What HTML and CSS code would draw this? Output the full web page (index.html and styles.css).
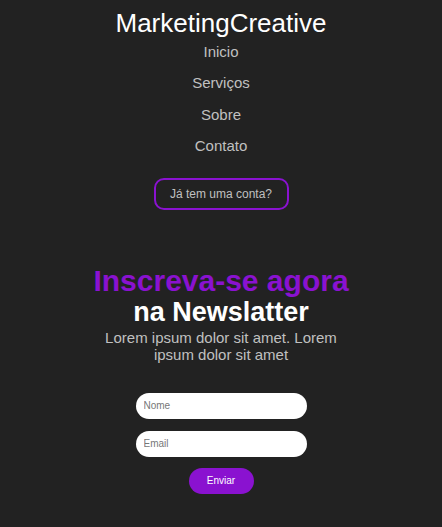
FILE: index.html
```html
<!DOCTYPE html>
<html lang="pt-BR">
<head>
<meta charset="utf-8">
<title>MarketingCreative</title>
<link rel="stylesheet" href="styles.css">
</head>
<body>
<header class="header">
  <h1 class="logo">MarketingCreative</h1>
  <nav class="nav">
    <a class="nav-link" href="#">Inicio</a>
    <a class="nav-link" href="#">Serviços</a>
    <a class="nav-link" href="#">Sobre</a>
    <a class="nav-link" href="#">Contato</a>
  </nav>
  <button class="account-btn">Já tem uma conta?</button>
</header>
<main class="newsletter">
  <h2 class="title"><span class="title-accent">Inscreva-se agora</span><span class="title-main">na Newslatter</span></h2>
  <p class="desc">Lorem ipsum dolor sit amet. Lorem ipsum dolor sit amet</p>
  <form class="form">
    <input class="field" type="text" placeholder="Nome">
    <input class="field" type="email" placeholder="Email">
    <button class="send-btn" type="button">Enviar</button>
  </form>
</main>
</body>
</html>
```
FILE: styles.css
```css
html, body {
  margin: 0;
  padding: 0;
  background: #222222;
  font-family: "Liberation Sans", Arial, sans-serif;
}
.header {
  display: flex;
  flex-direction: column;
  align-items: center;
}
.logo {
  margin: 8px 0 0;
  font-size: 26px;
  font-weight: normal;
  color: #ffffff;
  line-height: 30px;
}
.nav {
  display: flex;
  flex-direction: column;
  align-items: center;
  gap: 13.3px;
  margin-top: 5px;
}
.nav-link {
  color: #c0c0c0;
  text-decoration: none;
  font-size: 15px;
  line-height: 18px;
}
.account-btn {
  margin-top: 23px;
  width: 135px;
  height: 32px;
  border: 2px solid #8a12d0;
  border-radius: 10px;
  background: transparent;
  color: #c0c0c0;
  font-family: "Liberation Sans", Arial, sans-serif;
  font-size: 12px;
}
.newsletter {
  display: flex;
  flex-direction: column;
  align-items: center;
  margin-top: 55px;
}
.title {
  margin: 0;
  display: flex;
  flex-direction: column;
  align-items: center;
  font-weight: bold;
}
.title-accent {
  color: #8a12d0;
  font-size: 30px;
  line-height: 32px;
}
.title-main {
  color: #ffffff;
  font-size: 27px;
  line-height: 30px;
}
.desc {
  margin: 2px 0 0;
  width: 240px;
  text-align: center;
  color: #c0c0c0;
  font-size: 15px;
  line-height: 17px;
}
.form {
  display: flex;
  flex-direction: column;
  align-items: center;
  gap: 12px;
  margin-top: 30px;
}
.field {
  box-sizing: border-box;
  width: 171px;
  height: 26px;
  border: none;
  border-radius: 13px;
  background: #ffffff;
  padding: 0 8px;
  font-family: "Liberation Sans", Arial, sans-serif;
  font-size: 10px;
}
.field::placeholder {
  color: #777;
}
.send-btn {
  margin-top: -1px;
  width: 65px;
  height: 26px;
  border: none;
  border-radius: 13px;
  background: #8a12d0;
  color: #ffffff;
  font-family: "Liberation Sans", Arial, sans-serif;
  font-size: 10px;
}
```
